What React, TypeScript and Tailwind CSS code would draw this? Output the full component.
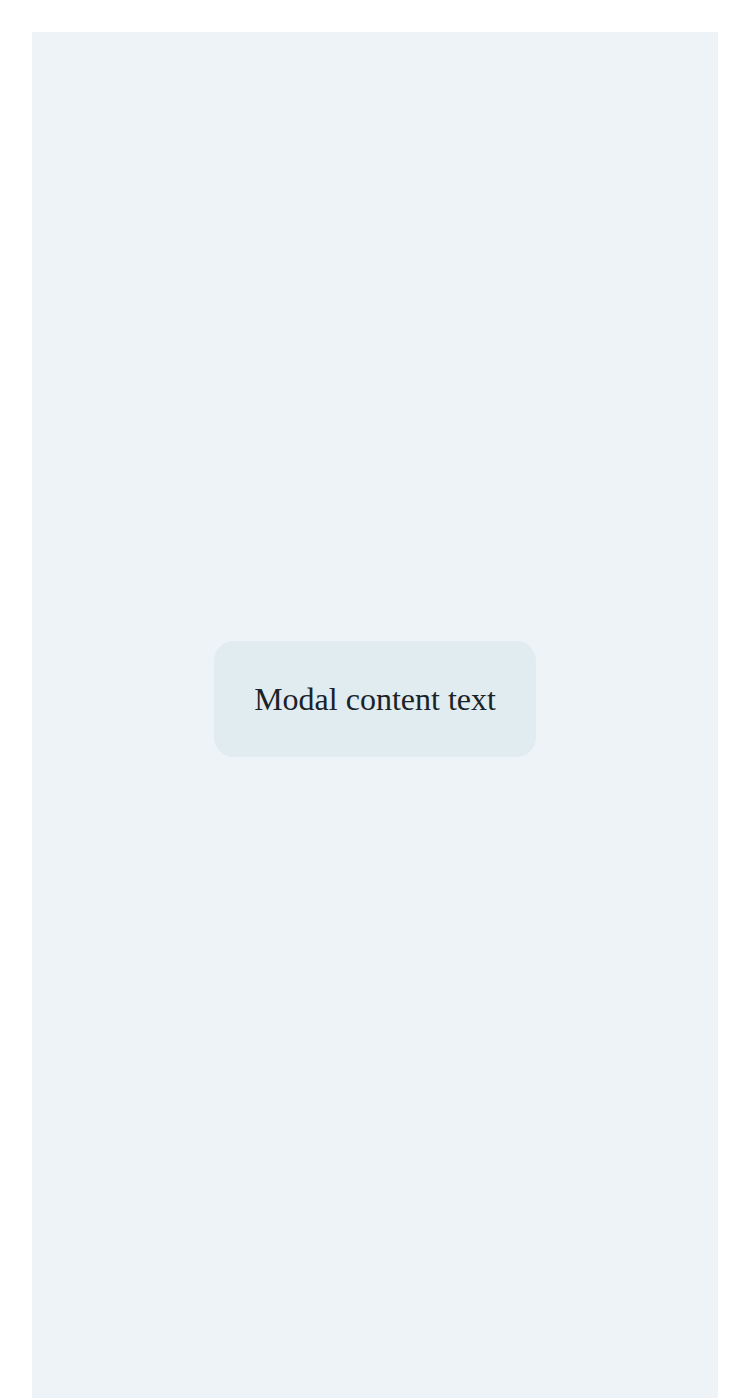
export default function App() {
  return (
    <div className="min-h-screen bg-white px-8 pt-8">
      <div className="h-[1366px] bg-[#edf3f6]" />
      <div className="fixed inset-0 flex items-center justify-center">
        <div className="rounded-[20px] bg-[#e1ecf0] px-10 py-10">
          <p className="font-['Liberation_Serif',serif] text-[32px] leading-[36px] text-[#1a2427]">
            Modal content text
          </p>
        </div>
      </div>
    </div>
  );
}
